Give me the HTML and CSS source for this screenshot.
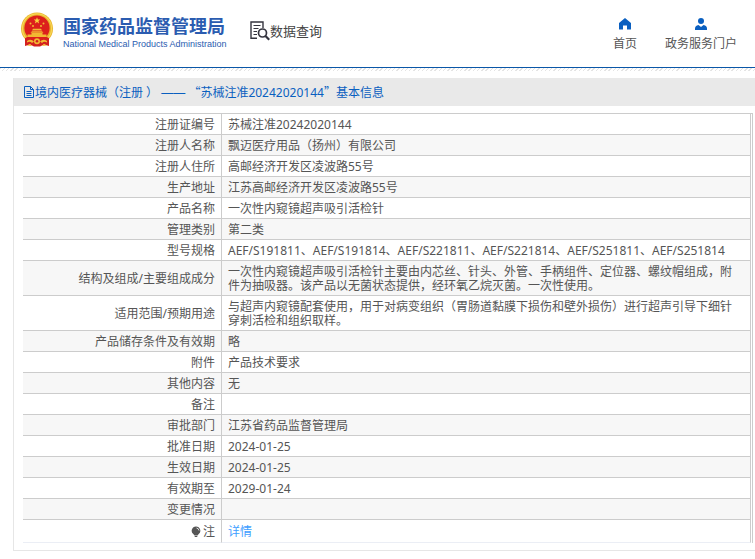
FILE: index.html
```html
<!DOCTYPE html>
<html lang="zh-CN">
<head>
<meta charset="utf-8">
<meta name="viewport" content="width=device-width, initial-scale=1">
<title>数据查询 - 国家药品监督管理局</title>
<link rel="stylesheet" href="styles.css">
</head>
<body>
<header class="site-header">
  <a class="brand" href="#">
    <svg class="emblem" viewBox="0 0 34 36" aria-hidden="true">
      <circle cx="17" cy="16.5" r="16" fill="#e9b42c"/>
      <circle cx="17" cy="16.500" r="14.600" fill="none" stroke="#f7d656" stroke-width="1.200"/>
      <path d="M5 26 L10 24 H24 L29 26 V34 L24 32.500 L20 34.500 H14 L10 32.500 L5 34 Z" fill="#d3201f"/>
      <circle cx="17" cy="16" r="12.600" fill="#dc1f1c"/>
      <path d="M17 5.200 l.9 2.300 2.400.1 -1.900 1.500 .7 2.400 -2.100-1.400 -2.100 1.400 .7-2.400 -1.900-1.500 2.400-.1z" fill="#f8d03c"/>
      <g fill="#f2b832">
        <circle cx="10.500" cy="11.500" r="1"/><circle cx="23.500" cy="11.500" r="1"/>
        <circle cx="13" cy="14" r="1"/><circle cx="21" cy="14" r="1"/>
        <path d="M12 18.500 L13 16.800 H21 L22 18.500 Z M10.500 20.700 L12 19.200 H22 L23.500 20.700 Z M11.500 21 H22.500 V22.500 H26.500 V25 H7.500 V22.500 H11.500 Z"/>
        <path d="M7 29 Q11 26.500 14 29.500 L12 31 Q10 29 7 30.500 Z M27 29 Q23 26.500 20 29.500 L22 31 Q24 29 27 30.500 Z"/>
        <circle cx="17" cy="29.300" r="3"/>
        <path d="M7 33.500 L10 31.800 L12 34 Z M27 33.500 L24 31.800 L22 34 Z"/>
      </g>
      <circle cx="17" cy="29.300" r="1.300" fill="#d3201f"/>
    </svg>
    <span class="brand-text">
      <span class="brand-cn">国家药品监督管理局</span>
      <span class="brand-en">National Medical Products Administration</span>
    </span>
  </a>
  <a class="section" href="#">
    <svg class="section-icon" viewBox="0 0 20 20" fill="none" stroke="#35353f" aria-hidden="true">
      <path d="M7 17.300 H1 V1 H13 V7" stroke-width="1.400"/>
      <path d="M3.500 4.500 H10.500 M3.500 7.500 H8.500 M3.500 10.500 H7 M3.500 13.500 H7" stroke-width="1.200"/>
      <circle cx="12.500" cy="12" r="4" stroke-width="1.700"/>
      <path d="M15.500 15 L19.200 18.700" stroke-width="2.200"/>
    </svg>
    <span>数据查询</span>
  </a>
  <nav class="site-nav">
    <a href="#">
      <svg class="nav-icon" viewBox="0 0 12 12" aria-hidden="true"><path d="M6 0 L12 5 V11 Q12 11.500 11.500 11.500 H8 V7.500 H4 V11.500 H.5 Q0 11.500 0 11 V5 Z" fill="#0a5fc0"/></svg>
      <span>首页</span>
    </a>
    <a href="#">
      <svg class="nav-icon" viewBox="0 0 12 12" fill="#0a5fc0" aria-hidden="true"><circle cx="6" cy="3" r="3"/><path d="M0 12 V10.500 Q0 7.500 3.500 7 L6 9 L8.500 7 Q12 7.500 12 10.500 V12 Z"/></svg>
      <span>政务服务门户</span>
    </a>
  </nav>
</header>
<main class="panel">
  <h1 class="panel-title">
    <svg class="file-icon" viewBox="0 0 10 12" fill="none" stroke="#0a5fc0" aria-hidden="true"><path d="M.5 .5 H6.500 L9.500 3.500 V11.500 H.5 Z M6.500 .5 V3.500 H9.500 M2.500 5.500 H7.500 M2.500 7.500 H7.500 M2.500 9.500 H7.500"/></svg>
    <span>境内医疗器械（注册 ） <span class="dash">——</span> <span class="wide">“</span>苏械注准20242020144<span class="wide">”</span>基本信息</span>
  </h1>
  <div class="table-frame">
    <table class="info">
      <tbody>
        <tr><th scope="row">注册证编号</th><td>苏械注准20242020144</td></tr>
        <tr><th scope="row">注册人名称</th><td>飘迈医疗用品（扬州）有限公司</td></tr>
        <tr><th scope="row">注册人住所</th><td>高邮经济开发区凌波路55号</td></tr>
        <tr><th scope="row">生产地址</th><td>江苏高邮经济开发区凌波路55号</td></tr>
        <tr><th scope="row">产品名称</th><td>一次性内窥镜超声吸引活检针</td></tr>
        <tr><th scope="row">管理类别</th><td>第二类</td></tr>
        <tr><th scope="row">型号规格</th><td>AEF/S191811、AEF/S191814、AEF/S221811、AEF/S221814、AEF/S251811、AEF/S251814</td></tr>
        <tr><th scope="row">结构及组成/主要组成成分</th><td>一次性内窥镜超声吸引活检针主要由内芯丝、针头、外管、手柄组件、定位器、螺纹帽组成，附件为抽吸器。该产品以无菌状态提供，经环氧乙烷灭菌。一次性使用。</td></tr>
        <tr><th scope="row">适用范围/预期用途</th><td>与超声内窥镜配套使用，用于对病变组织（胃肠道黏膜下损伤和壁外损伤）进行超声引导下细针穿刺活检和组织取样。</td></tr>
        <tr><th scope="row">产品储存条件及有效期</th><td>略</td></tr>
        <tr><th scope="row">附件</th><td>产品技术要求</td></tr>
        <tr><th scope="row">其他内容</th><td>无</td></tr>
        <tr><th scope="row">备注</th><td></td></tr>
        <tr><th scope="row">审批部门</th><td>江苏省药品监督管理局</td></tr>
        <tr><th scope="row">批准日期</th><td>2024-01-25</td></tr>
        <tr><th scope="row">生效日期</th><td>2024-01-25</td></tr>
        <tr><th scope="row">有效期至</th><td>2029-01-24</td></tr>
        <tr><th scope="row">变更情况</th><td></td></tr>
        <tr class="note"><th scope="row"><svg class="bulb" viewBox="0 0 10 12" aria-hidden="true"><path d="M5 .5 A4.300 4.300 0 0 1 7.500 8.300 L6.500 9.500 H3.500 L2.500 8.300 A4.300 4.300 0 0 1 5 .5 Z M3.700 10 H6.300 V11 H3.700 Z" fill="#555"/><path d="M5.500 2 Q7.700 2.400 8 4.500" fill="none" stroke="#fff" stroke-width=".8"/></svg>注</th><td><a href="#">详情</a></td></tr>
      </tbody>
    </table>
  </div>
</main>
</body>
</html>
```
FILE: styles.css
```css
* {
  box-sizing: border-box;
}

body {
  margin: 0;
  background: #fff;
  color: #555;
  font: 12px/14px "Noto Sans", "Noto Sans CJK SC", sans-serif;
}

a {
  color: inherit;
  text-decoration: none;
}

svg {
  display: block;
  flex: none;
}

.site-header {
  display: flex;
  align-items: flex-start;
  height: 71px;
  padding: 12px 18px 0 20px;
  background:
    linear-gradient(#0a57a8, #0a57a8) 0 67px / 100% 1px no-repeat,
    repeating-linear-gradient(135deg, #e4e4e4 0 1px, #fff 1px 3px) 0 68px / 100% 3px no-repeat;
}

.brand {
  display: flex;
  gap: 9px;
  color: #2b5cb0;
}

.emblem {
  width: 34px;
  height: 36px;
}

.brand-text {
  display: flex;
  flex-direction: column;
  width: 162px;
  padding-top: 2px;
  white-space: nowrap;
}

.brand-cn {
  font-size: 18px;
  font-weight: 700;
  line-height: 24px;
}

.brand-en {
  font: 9px/12px "Liberation Sans", sans-serif;
}

.section {
  display: flex;
  align-items: center;
  margin: 9px 0 0 25px;
  color: #444;
  font-size: 13px;
  line-height: 18px;
  white-space: nowrap;
}

.section-icon {
  width: 20px;
  height: 20px;
}

.site-nav {
  display: flex;
  gap: 28px;
  margin-left: auto;
  padding-top: 6px;
  white-space: nowrap;
}

.site-nav a {
  display: flex;
  flex-direction: column;
  align-items: center;
  gap: 7px;
}

.nav-icon {
  width: 12px;
  height: 12px;
}

.panel {
  margin: 7px 0 8px 13px;
  padding-bottom: 7px;
  border: solid #e6e6e6;
  border-width: 0 0 1px 1px;
}

.panel-title {
  display: flex;
  align-items: center;
  height: 28px;
  margin: 0 0 7px;
  padding-left: 10px;
  background: #e9e9e9;
  color: #0a5fc0;
  font-size: 12px;
  font-weight: 400;
}

.file-icon {
  width: 10px;
  height: 12px;
  margin-right: 1px;
}

.wide {
  font-family: "Noto Sans CJK SC", sans-serif;
}

.dash {
  font-family: "Liberation Sans", sans-serif;
}

.table-frame {
  margin: 0 2px 0 9px;
  padding-right: 1px;
  border: solid #ccc;
  border-width: 1px 1px 0 0;
}

.info {
  width: 100%;
  border-spacing: 0;
  table-layout: fixed;
}

.info th,
.info td {
  padding: 4px 6px 2px;
  border: solid #ccc;
  border-width: 0 1px 1px 0;
  font-weight: 400;
  text-align: left;
}

.info th {
  width: 199px;
  text-align: right;
}

.info td {
  padding-right: 8px;
}

.info tr:nth-child(even) {
  background: #f7f7f7;
}

.info .note th,
.info .note td {
  padding-top: 5px;
  padding-bottom: 3px;
  border-bottom-color: #ebeef5;
}

.note a {
  color: #409eff;
}

.bulb {
  display: inline-block;
  width: 10px;
  height: 12px;
  margin-right: 2px;
  vertical-align: -2px;
}
```
